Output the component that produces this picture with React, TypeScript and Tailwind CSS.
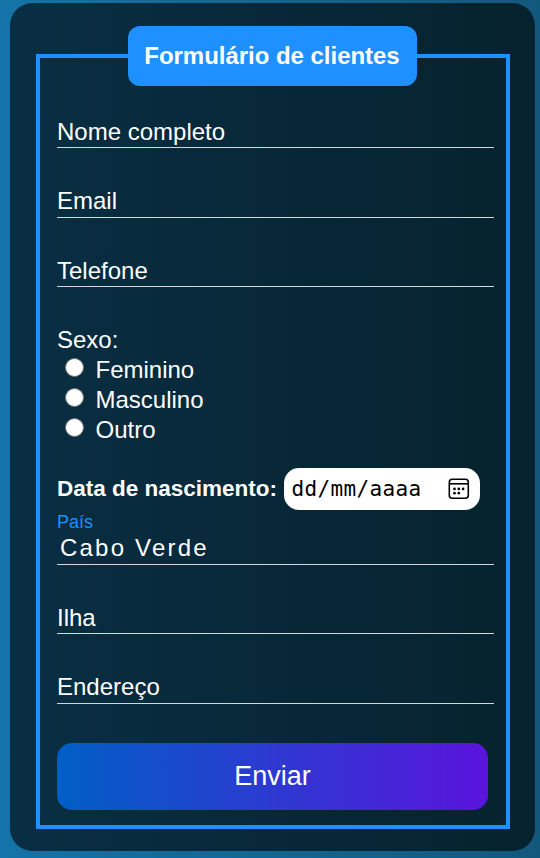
import React from "react";

function Field({ label, className = "h-[30px] leading-[28px]" }: { label: string; className?: string }) {
  return (
    <div className={`mb-[39.5px] w-[437px] border-b border-[#d0d8dc] text-[24px] whitespace-nowrap ${className}`}>
      {label}
    </div>
  );
}

function Radio({ label }: { label: string }) {
  return (
    <label className="flex h-[30px] items-center pl-[7.5px] text-[24px] leading-[30px]">
      <span className="mr-[12px] -mt-[5px] h-[19px] w-[19px] rounded-full border-[1.5px] border-[#767676] bg-white" />
      {label}
    </label>
  );
}

function CalendarIcon() {
  return (
    <svg width="22" height="22" viewBox="0 0 22 22" fill="none" stroke="black" strokeWidth="1.6">
      <rect x="1.3" y="1.3" width="19" height="19" rx="3" />
      <path d="M1.5 5.8H20" />
      <g fill="black" stroke="none">
        <circle cx="6.5" cy="10.9" r="1.35" />
        <circle cx="10.8" cy="10.9" r="1.35" />
        <circle cx="15.1" cy="10.9" r="1.35" />
        <circle cx="6.5" cy="15.2" r="1.35" />
        <circle cx="10.8" cy="15.2" r="1.35" />
      </g>
    </svg>
  );
}

export default function App() {
  return (
    <main className="h-[858px] w-[540px] overflow-hidden bg-linear-to-r/srgb from-[#1473a8] to-[#12587c] pt-[3px] pl-[9.5px] font-['Liberation_Sans',Arial,sans-serif] text-white">
      <form className="h-[848px] w-[525px] rounded-[22.5px] bg-linear-to-r/srgb from-[#092e43] to-[#06222e] px-[26px] pt-[22.5px]">
        <fieldset className="h-[803.5px] w-[474px] border-4 border-[#1e90ff] pr-[11.5px] pl-[17.5px]">
          <legend className="ml-[70.5px] flex h-[60px] w-[289px] items-center justify-center rounded-[12px] bg-[#1e90ff] text-[24px] font-bold tracking-[-0.03px] whitespace-nowrap">
            Formulário de clientes
          </legend>
          <div className="pt-[32.5px]">
            <Field label="Nome completo" />
            <Field label="Email" className="h-[30px] leading-[26px]" />
            <Field label="Telefone" />
          </div>
          <p className="h-[28.5px] text-[24px] leading-[26px]">Sexo:</p>
          <Radio label="Feminino" />
          <Radio label="Masculino" />
          <Radio label="Outro" />
          <div className="mt-[22.75px] flex h-[42px] items-center">
            <b className="w-[226.5px] shrink-0 text-[22.5px] whitespace-nowrap">Data de nascimento:</b>
            <div className="flex h-[42px] w-[196px] items-center justify-between rounded-[15px] bg-white pr-[10px] pl-[8px] text-black">
              <span className="mt-px font-['DejaVu_Sans_Mono',monospace] text-[21px] tracking-[0.35px]">dd/mm/aaaa</span>
              <CalendarIcon />
            </div>
          </div>
          <p className="h-[24px] text-[18px] leading-[24px] text-[#1e90ff]">País</p>
          <div className="mb-[39px] h-[31px] w-[437px] border-b border-[#d0d8dc] pl-[3px] text-[24px] leading-[28px] tracking-[2.2px]">
            Cabo Verde
          </div>
          <Field label="Ilha" />
          <Field label="Endereço" className="h-[31px] leading-[28px]" />
          <button type="button" className="-mt-px block h-[67px] w-[431px] rounded-[15px] bg-linear-to-r/srgb from-[#005fc6] to-[#5a14dc] text-[27px]">
            Enviar
          </button>
        </fieldset>
      </form>
    </main>
  );
}
